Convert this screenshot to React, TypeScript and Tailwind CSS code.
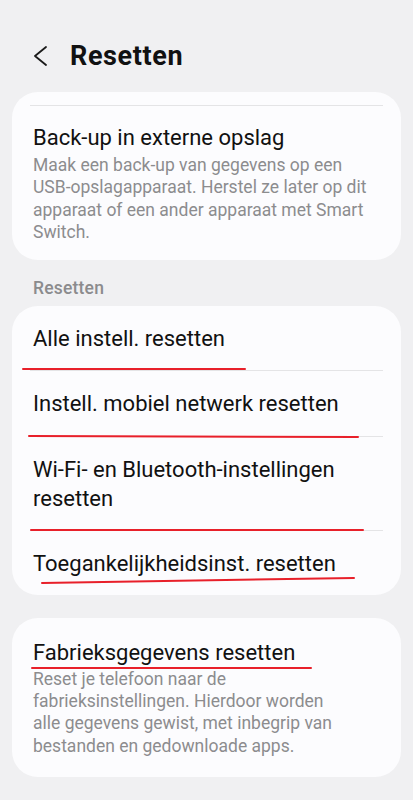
import React from "react";

const Divider = ({ className = "" }: { className?: string }) => (
  <div className={`h-px bg-[#e4e4e6] mx-[18px] ${className}`} />
);

export default function App() {
  return (
    <div className="relative w-full min-h-[800px] bg-[#f0f0f2] overflow-hidden font-['Roboto',sans-serif] text-[#111111]">
      {/* Header */}
      <div className="flex items-center pt-[40px] pl-[33px]">
        <svg width="14" height="22" viewBox="0 0 14 22" className="shrink-0">
          <polyline points="13,2 2,11 13,20" fill="none" stroke="#1a1a1a" strokeWidth="1.8" strokeLinecap="round" strokeLinejoin="round" />
        </svg>
        <h1 className="ml-[23px] text-[27px] leading-[32px] font-bold tracking-[0.6px]">Resetten</h1>
      </div>

      {/* Card 1 */}
      <div className="mx-[12px] mt-[20px] rounded-[26px] bg-[#fcfcfe] pt-[13px] pb-[16px]">
        <Divider />
        <div className="px-[21px] pt-[17px]">
          <div className="text-[22px] leading-[29px]">Back-up in externe opslag</div>
          <div className="mt-[2px] text-[17.5px] leading-[22.4px] text-[#8c8c8e] whitespace-nowrap">
            Maak een back-up van gegevens op een
            <br />
            USB-opslagapparaat. Herstel ze later op dit
            <br />
            apparaat of een ander apparaat met Smart
            <br />
            Switch.
          </div>
        </div>
      </div>

      {/* Section header */}
      <div className="px-[33px] mt-[17px] text-[17.5px] leading-[22px] font-medium text-[#8b8b8d] tracking-[0.2px]">Resetten</div>

      {/* Card 2 */}
      <div className="mx-[12px] mt-[7px] rounded-[26px] bg-[#fcfcfe]">
        <div className="px-[21px] pt-[18px] pb-[17px] text-[22px] leading-[29px]">Alle instell. resetten</div>
        <Divider />
        <div className="px-[21px] pt-[18px] pb-[18px] text-[22px] leading-[29px]">Instell. mobiel netwerk resetten</div>
        <Divider />
        <div className="px-[21px] pt-[18px] pb-[17px] text-[22px] leading-[29px] whitespace-nowrap">
          Wi-Fi- en Bluetooth-instellingen
          <br />
          resetten
        </div>
        <Divider />
        <div className="px-[21px] pt-[18px] pb-[17px] text-[22px] leading-[29px]">Toegankelijkheidsinst. resetten</div>
      </div>

      {/* Card 3 */}
      <div className="mx-[12px] mt-[23px] rounded-[26px] bg-[#fcfcfe] px-[21px] pt-[20px] pb-[20px]">
        <div className="text-[22px] leading-[29px]">Fabrieksgegevens resetten</div>
        <div className="mt-[1px] text-[17.5px] leading-[22.4px] text-[#8c8c8e] whitespace-nowrap">
          Reset je telefoon naar de
          <br />
          fabrieksinstellingen. Hierdoor worden
          <br />
          alle gegevens gewist, met inbegrip van
          <br />
          bestanden en gedownloade apps.
        </div>
      </div>

      {/* Red annotation lines */}
      <svg className="absolute left-0 top-0 pointer-events-none" width="413" height="800" viewBox="0 0 413 800">
        <g stroke="#e8202a" strokeWidth="2" strokeLinecap="round" fill="none">
          <line x1="23" y1="369" x2="245" y2="369" />
          <line x1="29" y1="436" x2="358" y2="437" />
          <line x1="31" y1="530" x2="363" y2="530" />
          <line x1="42" y1="583" x2="354" y2="578" />
          <line x1="32" y1="668" x2="311" y2="668" />
        </g>
      </svg>
    </div>
  );
}
